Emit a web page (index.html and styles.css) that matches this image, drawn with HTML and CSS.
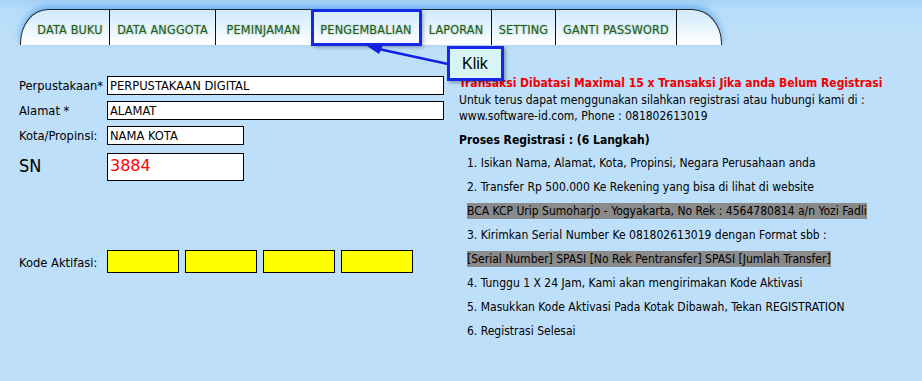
FILE: index.html
```html
<!DOCTYPE html>
<html>
<head>
    <title>Registrasi</title>
    <link rel="stylesheet" href="styles.css">
</head>
<body>
    <div class="tabbar">
        <div class="tab tab-first">DATA BUKU</div>
        <div class="tab tab-anggota">DATA ANGGOTA</div>
        <div class="tab tab-pinjam">PEMINJAMAN</div>
        <div class="tab tab-kembali active">PENGEMBALIAN</div>
        <div class="tab tab-laporan">LAPORAN</div>
        <div class="tab tab-setting">SETTING</div>
        <div class="tab tab-password">GANTI PASSWORD</div>
        <div class="tab-end"></div>
    </div>

    <div class="callout">
        <svg class="arrow" width="82" height="30" viewBox="0 0 82 30">
            <line x1="82" y1="20" x2="8" y2="4" stroke="#1020e0" stroke-width="2.5"/>
            <polygon points="1,2 17,1 13,10" fill="#1020e0"/>
        </svg>
        <div class="klik">Klik</div>
    </div>

    <div class="content">
        <div class="left-panel">
            <div class="row">
                <label>Perpustakaan*</label>
                <div class="field wide">PERPUSTAKAAN DIGITAL</div>
            </div>
            <div class="row">
                <label>Alamat *</label>
                <div class="field wide">ALAMAT</div>
            </div>
            <div class="row">
                <label>Kota/Propinsi:</label>
                <div class="field short">NAMA KOTA</div>
            </div>
            <div class="row sn-row">
                <label class="sn">SN</label>
                <div class="field short sn-field">3884</div>
            </div>
            <div class="row kode-row">
                <label>Kode Aktifasi:</label>
                <div class="kode-boxes">
                    <div class="kode"></div>
                    <div class="kode"></div>
                    <div class="kode"></div>
                    <div class="kode"></div>
                </div>
            </div>
        </div>

        <div class="right-panel">
            <div class="warning">Transaksi Dibatasi Maximal 15 x Transaksi Jika anda Belum Registrasi</div>
            <p class="info">Untuk terus dapat menggunakan silahkan registrasi atau hubungi kami di :<br>www.software-id.com, Phone : 081802613019</p>
            <h4>Proses Registrasi : (6 Langkah)</h4>
            <ul class="steps">
                <li>1. Isikan Nama, Alamat, Kota, Propinsi, Negara Perusahaan anda</li>
                <li>2. Transfer Rp 500.000 Ke Rekening yang bisa di lihat di website</li>
                <li><span class="mark">BCA KCP Urip Sumoharjo - Yogyakarta, No Rek : 4564780814 a/n Yozi Fadli</span></li>
                <li>3. Kirimkan Serial Number Ke 081802613019 dengan Format sbb :</li>
                <li><span class="mark">[Serial Number] SPASI [No Rek Pentransfer] SPASI [Jumlah Transfer]</span></li>
                <li>4. Tunggu 1 X 24 Jam, Kami akan mengirimakan Kode Aktivasi</li>
                <li>5. Masukkan Kode Aktivasi Pada Kotak Dibawah, Tekan REGISTRATION</li>
                <li>6. Registrasi Selesai</li>
            </ul>
        </div>
    </div>
</body>
</html>
```

FILE: styles.css
```css
body {
    margin: 0;
    height: 381px;
    overflow: hidden;
    font-family: "DejaVu Sans Condensed", "DejaVu Sans", sans-serif;
    font-stretch: condensed;
    font-size: 12px;
    color: #000;
    background: linear-gradient(#a4d2f6 0, #b8dcf9 10px, #bddff9 40px);
    position: relative;
}
.tabbar {
    display: flex;
    margin: 9px 0 0 20px;
    width: 702px;
    height: 36px;
    box-sizing: border-box;
    border: 1px solid #222;
    border-bottom: none;
    border-radius: 28px 30px 0 0 / 34px 34px 0 0;
    background: linear-gradient(#cfeafc, #ffffff);
    box-shadow: 0 -3px 6px rgba(40, 140, 240, 0.55);
}
.tab {
    display: flex;
    align-items: center;
    justify-content: center;
    box-sizing: border-box;
    padding-top: 4px;
    border-right: 1px solid #111;
    color: #1d5e1d;
    font-size: 12.5px;
    letter-spacing: 0.2px;
    text-shadow: 0 0 2px rgba(30, 90, 30, 0.45);
}
.tab-first {
    width: 89px;
    padding-left: 10px;
}
.tab-anggota {
    width: 106px;
}
.tab-pinjam {
    width: 96px;
}
.tab-kembali {
    width: 109px;
}
.tab-laporan {
    width: 71px;
}
.tab-setting {
    width: 64px;
}
.tab-password {
    width: 121px;
}
.tab.active {
    outline: 3px solid #1428e6;
    outline-offset: -2px;
    box-shadow: 2px 2px 4px rgba(0, 0, 0, 0.35);
}
.tab-end {
    flex: 1;
}
.callout {
    position: absolute;
    left: 366px;
    top: 44px;
    display: flex;
    align-items: flex-start;
}
.arrow {
    display: block;
}
.klik {
    margin: 2px 0 0 -1px;
    width: 51px;
    height: 29px;
    border: 3px solid #1428e6;
    background: #d9f4f6;
    font-family: "Liberation Sans", Arial, sans-serif;
    font-stretch: normal;
    font-size: 16px;
    line-height: 29px;
    text-indent: 12px;
    box-shadow: 2px 2px 3px rgba(0, 0, 0, 0.3);
}
.content {
    display: flex;
    padding: 31px 0 0 19px;
}
.left-panel {
    width: 440px;
    font-size: 12.8px;
}
.row {
    display: flex;
    align-items: flex-start;
    margin-bottom: 6px;
}
.row label {
    width: 88px;
    line-height: 14px;
    padding-top: 3px;
}
.field {
    height: 19px;
    box-sizing: border-box;
    border: 1px solid #000;
    background: #fff;
    padding: 1px 2px 0;
    line-height: 16px;
}
.wide {
    width: 337px;
}
.short {
    width: 137px;
}
.sn-row {
    margin-top: 8px;
}
.sn {
    font-size: 18px;
    padding-top: 6px !important;
}
.sn-field {
    height: 28px;
    color: #ff0000;
    font-family: "DejaVu Sans", sans-serif;
    font-stretch: normal;
    font-size: 16px;
    line-height: 22px;
}
.kode-row {
    margin-top: 69px;
    align-items: center;
}
.kode-boxes {
    display: flex;
    gap: 6px;
}
.kode {
    width: 72px;
    height: 23px;
    box-sizing: border-box;
    border: 1px solid #000;
    background: #ffff00;
}
.right-panel {
    flex: 1;
}
.warning {
    color: #f00000;
    font-weight: bold;
    line-height: 14px;
}
.info {
    margin: 2px 0 0;
    line-height: 16px;
}
h4 {
    margin: 8px 0 0;
    font-size: 12px;
    line-height: 16px;
}
.steps {
    list-style: none;
    margin: 7px 0 0 8px;
    padding: 0;
}
.steps li {
    height: 24px;
    line-height: 16px;
}
.mark {
    background: #8a8a8a;
    padding: 1px 0;
}
```
